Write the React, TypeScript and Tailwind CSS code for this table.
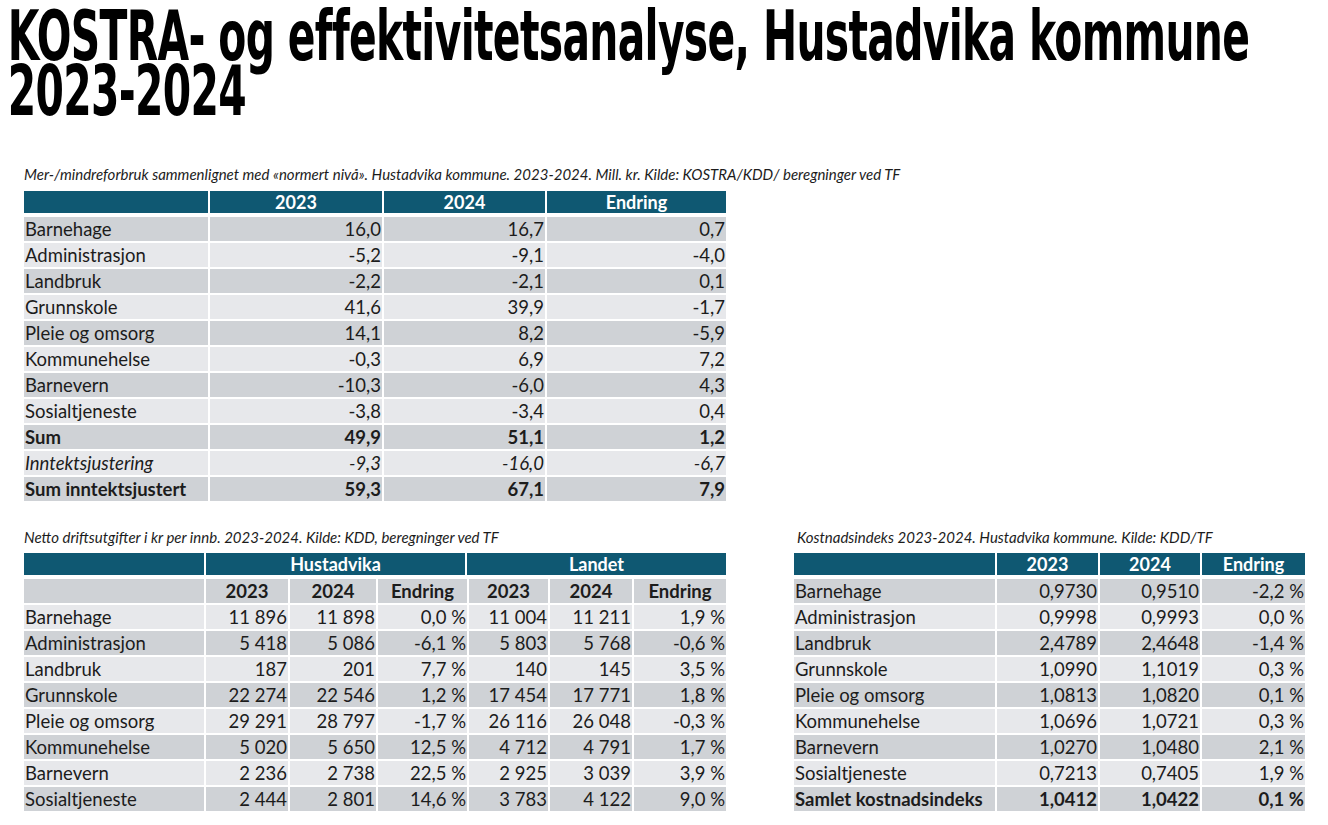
import React from 'react';

type Cell = { v: string; b?: boolean; i?: boolean };

const body = "font-['Lato','Open_Sans',sans-serif]";

const mindre: [string, string, string, string, 'b' | 'i' | ''][] = [
  ['Barnehage', '16,0', '16,7', '0,7', ''],
  ['Administrasjon', '-5,2', '-9,1', '-4,0', ''],
  ['Landbruk', '-2,2', '-2,1', '0,1', ''],
  ['Grunnskole', '41,6', '39,9', '-1,7', ''],
  ['Pleie og omsorg', '14,1', '8,2', '-5,9', ''],
  ['Kommunehelse', '-0,3', '6,9', '7,2', ''],
  ['Barnevern', '-10,3', '-6,0', '4,3', ''],
  ['Sosialtjeneste', '-3,8', '-3,4', '0,4', ''],
  ['Sum', '49,9', '51,1', '1,2', 'b'],
  ['Inntektsjustering', '-9,3', '-16,0', '-6,7', 'i'],
  ['Sum inntektsjustert', '59,3', '67,1', '7,9', 'b'],
];

const netto: string[][] = [
  ['Barnehage', '11 896', '11 898', '0,0 %', '11 004', '11 211', '1,9 %'],
  ['Administrasjon', '5 418', '5 086', '-6,1 %', '5 803', '5 768', '-0,6 %'],
  ['Landbruk', '187', '201', '7,7 %', '140', '145', '3,5 %'],
  ['Grunnskole', '22 274', '22 546', '1,2 %', '17 454', '17 771', '1,8 %'],
  ['Pleie og omsorg', '29 291', '28 797', '-1,7 %', '26 116', '26 048', '-0,3 %'],
  ['Kommunehelse', '5 020', '5 650', '12,5 %', '4 712', '4 791', '1,7 %'],
  ['Barnevern', '2 236', '2 738', '22,5 %', '2 925', '3 039', '3,9 %'],
  ['Sosialtjeneste', '2 444', '2 801', '14,6 %', '3 783', '4 122', '9,0 %'],
];

const indeks: string[][] = [
  ['Barnehage', '0,9730', '0,9510', '-2,2 %'],
  ['Administrasjon', '0,9998', '0,9993', '0,0 %'],
  ['Landbruk', '2,4789', '2,4648', '-1,4 %'],
  ['Grunnskole', '1,0990', '1,1019', '0,3 %'],
  ['Pleie og omsorg', '1,0813', '1,0820', '0,1 %'],
  ['Kommunehelse', '1,0696', '1,0721', '0,3 %'],
  ['Barnevern', '1,0270', '1,0480', '2,1 %'],
  ['Sosialtjeneste', '0,7213', '0,7405', '1,9 %'],
  ['Samlet kostnadsindeks', '1,0412', '1,0422', '0,1 %'],
];

function Row({ cells, idx, cols }: { cells: Cell[]; idx: number; cols: string }) {
  const bg = idx % 2 === 0 ? 'bg-[#cfd2d6]' : 'bg-[#e7e8eb]';
  return (
    <div className={`grid ${cols} gap-x-[2px] mt-[2px]`}>
      {cells.map((c, i) => (
        <div
          key={i}
          className={`${bg} h-[24px] flex items-center text-[18.5px] text-[#1c1c1c] leading-none whitespace-nowrap ${
            i === 0 ? 'pl-[1px] justify-start' : 'pr-[1px] justify-end'
          } ${c.b ? 'font-bold' : ''} ${c.i ? 'italic' : ''}`}
        >
          {c.v}
        </div>
      ))}
    </div>
  );
}

function Caption({ children }: { children: React.ReactNode }) {
  return <div className="text-[15px] italic text-[#1c1c1c] leading-none whitespace-nowrap">{children}</div>;
}

export default function App() {
  const c1 = 'grid-cols-[184px_172px_161px_179px]';
  const c2 = 'grid-cols-[180px_82px_86px_89px_79px_82px_92px]';
  const c3 = 'grid-cols-[201px_101px_100px_103px]';
  const head =
    'bg-[#0f5872] h-[22px] flex items-center justify-center text-white font-bold text-[18px] leading-none';

  return (
    <div className={`w-[1328px] h-[825px] bg-white overflow-hidden ${body}`}>
      <h1 className="pl-[12px] pt-[9px] font-['DejaVu_Sans_Condensed','DejaVu_Sans',sans-serif] font-bold text-[70px] leading-[55px] tracking-[-1px] text-black origin-left scale-x-[0.648] whitespace-nowrap">
        <div>KOSTRA- og effektivitetsanalyse, Hustadvika kommune</div>
        <div>2023-2024</div>
      </h1>

      <div className="pl-[24px] mt-[48px]">
        <Caption>
          Mer-/mindreforbruk sammenlignet med «normert nivå». Hustadvika kommune. 2023-2024. Mill. kr. Kilde:
          KOSTRA/KDD/ beregninger ved TF
        </Caption>
        <div className="w-[702px] mt-[9px]">
          <div className={`grid ${c1} gap-x-[2px]`}>
            <div className={head}></div>
            <div className={head}>2023</div>
            <div className={head}>2024</div>
            <div className={head}>Endring</div>
          </div>
          <div className="h-[2px]" />
          {mindre.map((r, i) => (
            <Row
              key={r[0]}
              idx={i}
              cols={c1}
              cells={[r[0], r[1], r[2], r[3]].map((v) => ({ v, b: r[4] === 'b', i: r[4] === 'i' }))}
            />
          ))}
        </div>
      </div>

      <div className="flex pl-[24px] mt-[29px] gap-[68px]">
        <div className="w-[702px]">
          <Caption>Netto driftsutgifter i kr per innb. 2023-2024. Kilde: KDD, beregninger ved TF</Caption>
          <div className="grid grid-cols-[180px_259px_259px] gap-x-[2px] mt-[8px]">
            <div className={head}></div>
            <div className={`${head} text-[#e8f8fb]`}>Hustadvika</div>
            <div className={`${head} text-[#e8f8fb]`}>Landet</div>
          </div>
          <div className={`grid ${c2} gap-x-[2px] mt-[4px]`}>
            {['', '2023', '2024', 'Endring', '2023', '2024', 'Endring'].map((h, i) => (
              <div
                key={i}
                className="bg-[#cfd2d6] h-[24px] flex items-center justify-center font-bold text-[18.5px] text-[#1c1c1c] leading-none"
              >
                {h}
              </div>
            ))}
          </div>
          {netto.map((r, i) => (
            <Row key={r[0]} idx={i + 1} cols={c2} cells={r.map((v) => ({ v }))} />
          ))}
        </div>

        <div className="w-[511px]">
          <div className="pl-[3px]">
            <Caption>Kostnadsindeks 2023-2024. Hustadvika kommune. Kilde: KDD/TF</Caption>
          </div>
          <div className={`grid ${c3} gap-x-[2px] mt-[8px]`}>
            <div className={head}></div>
            <div className={head}>2023</div>
            <div className={head}>2024</div>
            <div className={head}>Endring</div>
          </div>
          <div className="h-[2px]" />
          {indeks.map((r, i) => (
            <Row
              key={r[0]}
              idx={i}
              cols={c3}
              cells={r.map((v) => ({ v, b: r[0] === 'Samlet kostnadsindeks' }))}
            />
          ))}
        </div>
      </div>
    </div>
  );
}
